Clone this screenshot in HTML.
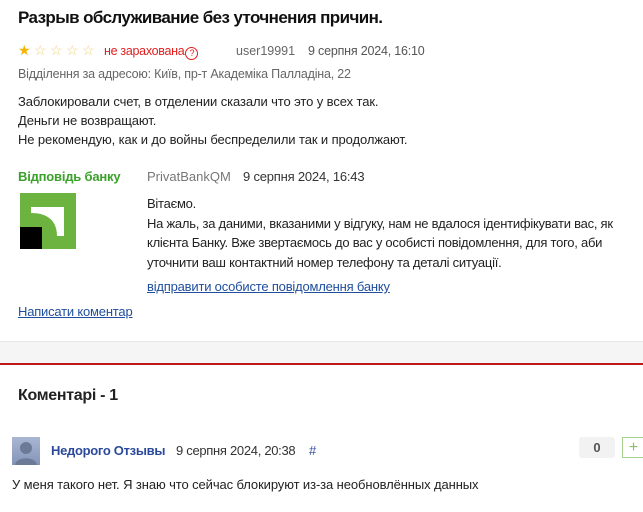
<!DOCTYPE html>
<html><head><meta charset="utf-8"><style>
body{margin:0;width:643px;height:512px;overflow:hidden;background:#fff;font-family:"Liberation Sans",sans-serif;color:#222;position:relative}
.a{position:absolute;white-space:nowrap}
a{color:#1f4e9c;text-decoration:underline}
.st{display:inline-block;width:16px;font-size:14px}
</style></head><body>
<div class="a" style="left:18px;top:8px;font-size:17px;font-weight:bold;color:#111;letter-spacing:-0.6px">Разрыв обслуживание без уточнения причин.</div>
<div class="a" style="left:18px;top:42px;font-size:12.5px;line-height:16px">
<span class="st" style="color:#f5b400">★</span><span class="st" style="color:#f0d27a">☆</span><span class="st" style="color:#f0d27a">☆</span><span class="st" style="color:#f0d27a">☆</span><span class="st" style="color:#f0d27a">☆</span></div>
<div class="a" style="left:104px;top:43px;font-size:12.5px;line-height:16px;color:#e01e1e;letter-spacing:-0.3px">не зарахована<span style="display:inline-block;width:11px;height:11px;border:1.3px solid #e01e1e;border-radius:50%;font-size:9px;line-height:11px;text-align:center;margin-left:1px;vertical-align:-1px">?</span></div>
<div class="a" style="left:236px;top:43px;font-size:12.5px;line-height:16px;color:#666">user19991</div>
<div class="a" style="left:308px;top:43px;font-size:12.5px;line-height:16px;color:#555;letter-spacing:-0.2px">9 серпня 2024, 16:10</div>
<div class="a" style="left:18px;top:67px;font-size:12.5px;color:#666;letter-spacing:-0.2px">Відділення за адресою: Київ, пр-т Академіка Палладіна, 22</div>
<div class="a" style="left:18px;top:92px;font-size:13px;line-height:19px;color:#222;letter-spacing:-0.1px">Заблокировали счет, в отделении сказали что это у всех так.<br>Деньги не возвращают.<br>Не рекомендую, как и до войны беспределили так и продолжают.</div>
<div class="a" style="left:18px;top:169px;font-size:13px;font-weight:bold;color:#3aa12a;letter-spacing:-0.2px">Відповідь банку</div>
<svg class="a" style="left:20px;top:193px" width="56" height="56" viewBox="0 0 56 56"><rect width="56" height="56" fill="#6cb33f"/><path d="M11 14 H44 V43 H37 C37 29 29 20 11 20 Z" fill="#fff"/><rect x="0" y="34" width="22" height="22" fill="#000"/></svg>
<div class="a" style="left:147px;top:169px;font-size:13px;color:#777">PrivatBankQM</div>
<div class="a" style="left:243px;top:169px;font-size:13px;color:#333;letter-spacing:-0.2px">9 серпня 2024, 16:43</div>
<div class="a" style="left:147px;top:194px;font-size:13px;line-height:19.5px;color:#222;letter-spacing:-0.25px">Вітаємо.<br>На жаль, за даними, вказаними у відгуку, нам не вдалося ідентифікувати вас, як<br>клієнта Банку. Вже звертаємось до вас у особисті повідомлення, для того, аби<br>уточнити ваш контактний номер телефону та деталі ситуації.</div>
<div class="a" style="left:147px;top:279px;font-size:13px;letter-spacing:-0.2px"><a>відправити особисте повідомлення банку</a></div>
<div class="a" style="left:18px;top:304px;font-size:13px;letter-spacing:-0.2px"><a>Написати коментар</a></div>
<div class="a" style="left:0;top:341px;width:643px;height:21px;background:#f5f5f5;border-top:1px solid #e8e8e8;border-bottom:2px solid #c01818"></div>
<div class="a" style="left:18px;top:387px;font-size:16px;font-weight:bold;color:#222;letter-spacing:-0.3px">Коментарі - 1</div>
<div class="a" style="left:12px;top:437px;width:28px;height:28px;background:linear-gradient(#a9b7d4,#8494b8)"><svg width="28" height="28"><circle cx="14" cy="11" r="6" fill="#6d7a97"/><path d="M3 28 C4 19 24 19 25 28Z" fill="#6d7a97"/></svg></div>
<div class="a" style="left:51px;top:443px;font-size:13px;font-weight:bold;color:#2b4a9b;letter-spacing:-0.3px">Недорого Отзывы</div>
<div class="a" style="left:176px;top:443px;font-size:13px;color:#333;letter-spacing:-0.3px">9 серпня 2024, 20:38</div>
<div class="a" style="left:309px;top:443px;font-size:13px;color:#2b4a9b">#</div>
<div class="a" style="left:579px;top:437px;width:36px;height:21px;background:#f2f2f2;border-radius:3px;font-size:13px;font-weight:bold;color:#555;text-align:center;line-height:21px">0</div>
<div class="a" style="left:622px;top:437px;width:21px;height:19px;border:1px solid #a5d38f;color:#8cc26f;font-size:16px;line-height:19px;text-align:center">+</div>
<div class="a" style="left:12px;top:477px;font-size:13px;color:#222;letter-spacing:-0.1px">У меня такого нет. Я знаю что сейчас блокируют из-за необновлённых данных</div>
</body></html>
